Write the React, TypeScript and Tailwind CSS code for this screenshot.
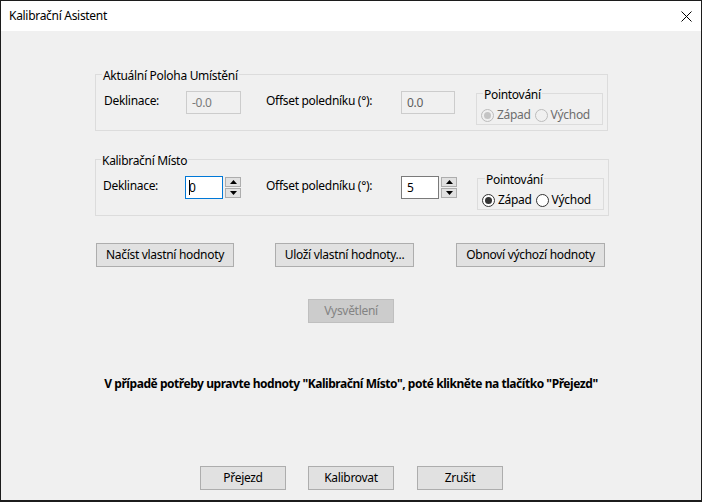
import React from "react";

const font = { fontFamily: '"Noto Sans", "Liberation Sans", sans-serif' };

function Radio({ checked, disabled, label }: { checked?: boolean; disabled?: boolean; label: string }) {
  return (
    <div className="flex items-center">
      <div
        className={
          "w-[13px] h-[13px] rounded-full border flex items-center justify-center " +
          (disabled ? "border-[#bcbcbc] bg-[#f0f0f0]" : "border-[#333333] bg-white")
        }
      >
        {checked && (
          <div className={"w-[7px] h-[7px] rounded-full " + (disabled ? "bg-[#c4c4c4]" : "bg-[#333333]")} />
        )}
      </div>
      <span className={"ml-[3px] text-[12px] leading-[16px] " + (disabled ? "text-[#6d6d6d]" : "text-black")}>
        {label}
      </span>
    </div>
  );
}

function Spinner() {
  return (
    <div className="ml-[2px] mt-[1px] w-[16px] h-[21px] flex flex-col justify-between">
      <div className="h-[10px] border border-[#adadad] bg-[#e1e1e1] flex items-center justify-center">
        <svg width="7" height="4" viewBox="0 0 7 4"><path d="M0 4 L3.5 0 L7 4 Z" fill="#000" /></svg>
      </div>
      <div className="h-[10px] border border-[#adadad] bg-[#e1e1e1] flex items-center justify-center">
        <svg width="7" height="4" viewBox="0 0 7 4"><path d="M0 0 L3.5 4 L7 0 Z" fill="#000" /></svg>
      </div>
    </div>
  );
}

function Legend({ text, left }: { text: string; left: string }) {
  return (
    <span className={"absolute top-[-6px] " + left + " px-[1px] bg-[#f0f0f0] text-[12px] leading-[14px] text-black"}>
      {text}
    </span>
  );
}

function Btn({ children, className }: { children: React.ReactNode; className: string }) {
  return (
    <div
      className={
        "h-[24px] border border-[#adadad] bg-[#e1e1e1] flex items-center justify-center text-[12px] text-black " +
        className
      }
    >
      {children}
    </div>
  );
}

export default function App() {
  return (
    <div
      className="w-[702px] h-[502px] border border-[#1c1c1c] border-b-2 bg-[#f0f0f0] flex flex-col overflow-hidden tracking-[-0.3px]"
      style={font}
    >
      {/* title bar */}
      <div className="h-[30px] bg-white flex items-center justify-between shrink-0">
        <span className="ml-[8px] text-[12px] text-black leading-[16px]">Kalibrační Asistent</span>
        <svg className="mr-[9px]" width="11" height="11" viewBox="0 0 11 11">
          <path d="M0.5 0.5 L10.5 10.5 M10.5 0.5 L0.5 10.5" stroke="#000" strokeWidth="1" />
        </svg>
      </div>

      {/* Group 1 */}
      <div className="relative ml-[94px] mt-[43px] w-[513px] h-[57px] border border-[#dcdcdc] shrink-0">
        <Legend text="Aktuální Poloha Umístění" left="left-[6px]" />
        <div className="flex items-start pt-[16px] pl-[8px]">
          <span className="w-[82px] text-[12px] leading-[16px] mt-[2px]">Deklinace:</span>
          <div className="w-[55px] h-[23px] border border-[#cccccc] bg-[#f0f0f0] flex items-center pl-[5px] text-[12px] text-[#7a7a7a]">
            -0.0
          </div>
          <span className="ml-[25px] w-[135px] text-[12px] leading-[16px] mt-[2px]">Offset poledníku (°):</span>
          <div className="w-[54px] h-[23px] border border-[#cccccc] bg-[#f0f0f0] flex items-center pl-[5px] text-[12px] text-[#5f5f5f]">
            0.0
          </div>
          <div className="relative ml-[21px] mt-[2px] w-[127px] h-[32px] border border-[#dcdcdc]">
            <Legend text="Pointování" left="left-[6px]" />
            <div className="flex items-center pl-[4px] pt-[13px] gap-[4px]">
              <Radio checked disabled label="Západ" />
              <Radio disabled label="Východ" />
            </div>
          </div>
        </div>
      </div>

      {/* Group 2 */}
      <div className="relative ml-[94px] mt-[28px] w-[514px] h-[57px] border border-[#dcdcdc] shrink-0">
        <Legend text="Kalibrační Místo" left="left-[5px]" />
        <div className="flex items-start pt-[16px] pl-[7px]">
          <span className="w-[82px] text-[12px] leading-[16px] mt-[2px]">Deklinace:</span>
          <div className="w-[38px] h-[23px] border border-[#0078d7] bg-white flex items-center pl-[3px] text-[12px] text-black">
            <span className="w-[1px] h-[15px] bg-black mr-[-1px]" />0
          </div>
          <Spinner />
          <span className="ml-[25px] w-[135px] text-[12px] leading-[16px] mt-[2px]">Offset poledníku (°):</span>
          <div className="w-[38px] h-[23px] border border-[#7a7a7a] bg-white flex items-center pl-[5px] text-[12px] text-black">
            5
          </div>
          <Spinner />
          <div className="relative ml-[20px] mt-[2px] w-[127px] h-[32px] border border-[#dcdcdc]">
            <Legend text="Pointování" left="left-[7px]" />
            <div className="flex items-center pl-[4px] pt-[13px] gap-[4px]">
              <Radio checked label="Západ" />
              <Radio label="Východ" />
            </div>
          </div>
        </div>
      </div>

      {/* buttons row */}
      <div className="flex mt-[27px] shrink-0">
        <Btn className="ml-[95px] w-[138px]">Načíst vlastní hodnoty</Btn>
        <Btn className="ml-[41px] w-[139px]">Uloží vlastní hodnoty...</Btn>
        <Btn className="ml-[42px] w-[149px]">Obnoví výchozí hodnoty</Btn>
      </div>

      <div className="flex mt-[32px] shrink-0">
        <div className="ml-[307px] w-[86px] h-[24px] border border-[#bfbfbf] bg-[#cccccc] flex items-center justify-center text-[12px] text-[#838383]">
          Vysvětlení
        </div>
      </div>

      <div className="mt-[53px] text-center text-[12px] leading-[16px] font-bold text-black shrink-0 tracking-[-0.45px]">
        V případě potřeby upravte hodnoty "Kalibrační Místo", poté klikněte na tlačítko "Přejezd"
      </div>

      <div className="flex mt-[74px] shrink-0">
        <Btn className="ml-[199px] w-[86px]">Přejezd</Btn>
        <Btn className="ml-[22px] w-[86px]">Kalibrovat</Btn>
        <Btn className="ml-[23px] w-[86px]">Zrušit</Btn>
      </div>
    </div>
  );
}
